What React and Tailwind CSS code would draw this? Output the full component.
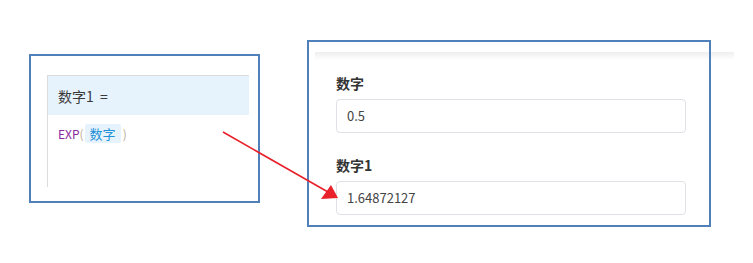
export default function App() {
  return (
    <div
      className="relative isolate w-[753px] h-[263px] bg-white overflow-hidden text-[#333]"
      style={{ fontFamily: '"Noto Sans CJK SC", "Noto Sans", sans-serif' }}
    >
      <div className="flex items-start">
        <FormulaBox />
        <ResultBox />
      </div>
      <Arrow />
    </div>
  )
}

function FormulaBox() {
  return (
    <div className="ml-[29px] mt-[54px] w-[231px] h-[149px] border-2 border-[#4f80ba] pl-[16px] pt-[19px]">
      <div className="w-[202px] h-[112px] border-l border-t border-[#dcdcdc]">
        <div className="h-[39px] bg-[#e6f3fd] pl-[10px] flex items-center text-[14px] leading-none text-[#3a3a3a]">
          数字1&nbsp;&nbsp;=
        </div>
        <div className="pl-[10px] pt-[9px] flex items-center text-[12px] leading-none">
          <span className="text-[#8b2a9b]">EXP</span>
          <span className="text-[#b9ad95]">(</span>
          <span className="ml-[1px] h-[19px] px-[5px] bg-[#e6f3fd] text-[#2291d6] text-[13px] rounded-[2px] flex items-center">数字</span>
          <span className="ml-[2px] text-[#b9ad95]">)</span>
        </div>
      </div>
    </div>
  )
}

function ResultBox() {
  return (
    <div className="ml-[47px] mt-[40px] w-[404px] h-[187px] border-2 border-[#4f80ba] pt-[10px]">
      <div className="relative -z-10 ml-[6px] w-[419px] h-[8px] bg-gradient-to-b from-[#eeeeee] to-white" />
      <div className="pl-[27px] pt-[15px]">
        <Field label="数字" value="0.5" />
        <div className="h-[24px]" />
        <Field label="数字1" value="1.64872127" />
      </div>
    </div>
  )
}

function Field({ label, value }) {
  return (
    <div>
      <div className="h-[16px] flex items-center font-bold text-[14px] leading-none text-[#333]">{label}</div>
      <div className="mt-[8px] w-[350px] h-[34px] border border-[#dfe1e6] rounded-[4px] pl-[10px] flex items-center text-[13px] text-[#444]">
        {value}
      </div>
    </div>
  )
}

function Arrow() {
  return (
    <svg className="absolute inset-0 pointer-events-none" width="753" height="263" viewBox="0 0 753 263">
      <line x1="223" y1="132" x2="328" y2="192" stroke="#e8212b" strokeWidth="1.6" />
      <polygon points="338,198 321,199 331,185" fill="#e8212b" />
    </svg>
  )
}
